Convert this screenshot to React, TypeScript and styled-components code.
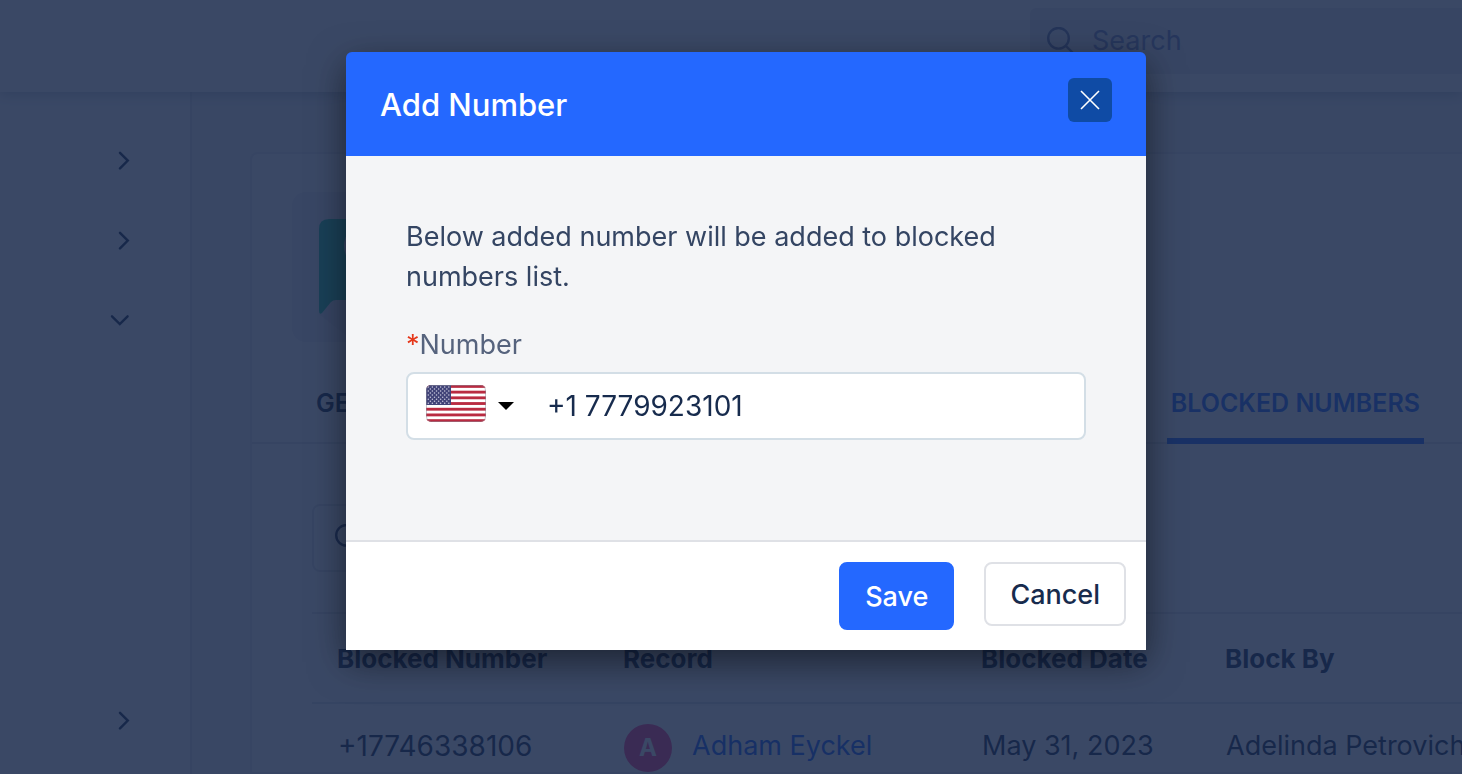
import React from "react";
import styled, { createGlobalStyle } from "styled-components";

const GlobalStyle = createGlobalStyle`
  *, *::before, *::after { box-sizing: border-box; }
  body {
    margin: 0;
    overflow: hidden;
    background: #f4f5f7;
    color: #172b4d;
    font-family: Inter, "Liberation Sans", sans-serif;
    font-size: 27px;
    line-height: 40px;
  }
  button, input { font: inherit; color: inherit; }
  button { padding: 0; border: 0; background: none; cursor: pointer; }
  svg { display: block; flex: none; }
`;

/* ---------- page ---------- */

const Page = styled.div`
  display: flex;
  flex-direction: column;
  height: 100vh;
  overflow: hidden;
`;

const TopBar = styled.header`
  display: flex;
  justify-content: flex-end;
  flex: none;
  padding: 8px 0 18px;
  background: #fff;
  box-shadow: 0 2px 12px rgba(9, 30, 66, 0.25);
  z-index: 1;
`;

const GlobalSearch = styled.label`
  display: flex;
  align-items: center;
  gap: 16px;
  width: 432px;
  height: 66px;
  padding-left: 16px;
  border-radius: 6px 0 0 6px;
  background: #e6eaef;
  color: #6a78a8;
`;

const SearchInput = styled.input`
  flex: 1;
  min-width: 0;
  border: 0;
  outline: 0;
  background: none;
  &::placeholder { color: #7a87c0; opacity: 1; }
`;

const Columns = styled.div`
  display: flex;
  flex: 1;
  min-height: 0;
`;

const Sidebar = styled.nav`
  flex: none;
  width: 192px;
  padding-top: 28px;
  border-right: 2px solid #e3e5ea;
  background: #fbfcfd;
`;

const NavRow = styled.button<{ $open?: boolean }>`
  display: flex;
  align-items: center;
  justify-content: flex-end;
  width: 100%;
  height: 80px;
  padding-right: 60px;
  margin-bottom: ${(p) => (p.$open ? "320px" : "0")};
`;

const Main = styled.main`
  flex: 1;
  min-width: 0;
  padding: 60px 0 0 58px;
`;

const Card = styled.section`
  height: 100%;
  border: 2px solid #e6e8ed;
  border-right: 0;
  border-radius: 8px 0 0 0;
  background: #fff;
  overflow: hidden;
`;

const AppTile = styled.div`
  width: 150px;
  height: 150px;
  margin: 38px 0 0 40px;
  border-radius: 14px;
  background: #eeedf4;
`;

const Tabs = styled.div`
  display: flex;
  justify-content: space-between;
  height: 102px;
  padding: 18px 38px 0 60px;
  border-bottom: 2px solid #e0e3e8;
`;

const Tab = styled.button<{ $active?: boolean }>`
  height: 84px;
  padding: 8px 4px 0;
  border-bottom: 6px solid ${(p) => (p.$active ? "#2468ff" : "transparent")};
  color: ${(p) => (p.$active ? "#2468ff" : "#172b4d")};
  font-size: 25px;
  font-weight: 600;
`;

const Panel = styled.div`
  padding: 60px 0 0 60px;
`;

const TableSearch = styled.label`
  display: flex;
  align-items: center;
  width: 500px;
  height: 68px;
  padding-left: 20px;
  margin-bottom: 40px;
  border: 2px solid #e0e3e8;
  border-radius: 8px;
  color: #2c3d66;
`;

const Table = styled.table`
  width: 100%;
  table-layout: fixed;
  border-collapse: separate;
  border-spacing: 0;
  border-top: 2px solid #e0e3e8;
`;

const HeadCell = styled.th<{ $width?: number }>`
  width: ${(p) => (p.$width ? `${p.$width}px` : "auto")};
  height: 90px;
  padding: 2px 0 0 25px;
  border-bottom: 2px solid #dfe2e8;
  font-size: 26px;
  font-weight: 700;
  text-align: left;
  white-space: nowrap;
`;

const Cell = styled.td<{ $numeric?: boolean }>`
  height: 84px;
  padding: 20px 0 0 26px;
  font-size: ${(p) => (p.$numeric ? 28 : 27)}px;
  line-height: 44px;
  vertical-align: top;
  white-space: nowrap;
`;

const Person = styled.div`
  display: flex;
  align-items: flex-start;
  gap: 20px;
`;

const Avatar = styled.span`
  width: 48px;
  height: 48px;
  border-radius: 50%;
  background: #ff3c8c;
  color: #fff;
  font-size: 24px;
  font-weight: 700;
  line-height: 48px;
  text-align: center;
`;

const PersonLink = styled.a`
  color: #1460ff;
  text-decoration: none;
`;

/* ---------- dialog ---------- */

const Backdrop = styled.div`
  position: fixed;
  inset: 0;
  z-index: 10;
  display: flex;
  align-items: flex-start;
  justify-content: center;
  padding: 52px 0 0 30px;
  background: rgba(23, 40, 74, 0.85);
`;

const Dialog = styled.form`
  width: 800px;
  border-radius: 6px 6px 0 0;
  box-shadow: 0 12px 36px rgba(0, 0, 0, 0.5);
  overflow: hidden;
`;

const DialogHeader = styled.header`
  display: flex;
  align-items: flex-start;
  justify-content: space-between;
  height: 104px;
  padding: 26px 34px;
  background: #2468ff;
  color: #fff;
`;

const DialogTitle = styled.h2`
  margin: 0;
  font-size: 31px;
  font-weight: 500;
  line-height: 54px;
`;

const CloseButton = styled.button`
  display: grid;
  place-items: center;
  width: 44px;
  height: 44px;
  border-radius: 6px;
  background: #0f4ba5;
`;

const DialogBody = styled.div`
  padding: 61px 60px 100px;
  border-bottom: 2px solid #dfe1e6;
  background: #f4f5f7;
`;

const Message = styled.p`
  margin: 0 0 28px;
  color: #344563;
`;

const FieldLabel = styled.label`
  display: block;
  margin-bottom: 7px;
  color: #56637d;
`;

const Required = styled.span`
  color: #e5371a;
`;

const PhoneField = styled.div`
  display: flex;
  align-items: center;
  height: 68px;
  padding: 0 18px;
  border: 2px solid #d3dee6;
  border-radius: 8px;
  background: #fff;
`;

const CountryButton = styled.button`
  display: flex;
  align-items: center;
  gap: 12px;
  margin-right: 33px;
`;

const PhoneInput = styled.input`
  flex: 1;
  min-width: 0;
  padding: 0;
  border: 0;
  outline: 0;
  background: none;
  font-size: 28px;
`;

const DialogFooter = styled.footer`
  display: flex;
  align-items: flex-start;
  justify-content: flex-end;
  gap: 30px;
  padding: 20px;
  background: #fff;
`;

const ActionButton = styled.button<{ $primary?: boolean }>`
  height: ${(p) => (p.$primary ? 68 : 64)}px;
  padding: 2px 24px 0;
  border: 2px solid ${(p) => (p.$primary ? "#2468ff" : "#dfe1e6")};
  border-radius: 8px;
  background: ${(p) => (p.$primary ? "#2468ff" : "#fff")};
  color: ${(p) => (p.$primary ? "#fff" : "#172b4d")};
  font-weight: 500;
`;

/* ---------- drawings ---------- */

const Magnifier = () => (
  <svg width="28" height="28" viewBox="0 0 28 28" fill="none" stroke="currentColor" strokeWidth="2.4">
    <circle cx="12.5" cy="11.3" r="10.3" />
    <path d="M19.8 18.8 L27 26" />
  </svg>
);

const Chevron = ({ down }: { down?: boolean }) => (
  <svg width="20" height="20" viewBox="0 0 20 20" fill="none" stroke="#172b4d" strokeWidth="2.4" strokeLinecap="round">
    <path d={down ? "M2 6.3 L9.8 14 L17.6 6.3" : "M10 2.8 L17.8 10.6 L10 18.4"} />
  </svg>
);

const ChatBubble = () => (
  <svg width="150" height="150" viewBox="0 0 150 150">
    <path d="M27 122 L100 180 L150 150 V108 H42 Z" fill="#e4e3ec" />
    <path d="M37 27 H113 Q123 27 123 37 V98 Q123 108 113 108 H44 Q41 108 39 110 L30 121 Q27 123 27 119 V37 Q27 27 37 27 Z" fill="#28c8a0" />
    <circle cx="75" cy="54" r="23" fill="#eeedf4" />
  </svg>
);

const stripes = [0, 2, 4, 6, 8, 10, 12];
const starRows = [0, 1, 2, 3, 4, 5, 6, 7, 8];

const UsFlag = () => (
  <svg width="60" height="42" viewBox="0 0 60 42">
    <defs>
      <clipPath id="flag-shape">
        <rect width="60" height="37" rx="5" />
      </clipPath>
    </defs>
    <g clipPath="url(#flag-shape)">
      <rect width="60" height="37" fill="#fff" />
      {stripes.map((i) => (
        <rect key={i} y={i * 2.85} width="60" height="2.85" fill="#b92b41" />
      ))}
      <rect width="25" height="20" fill="#414378" />
      {starRows.map((row) =>
        (row % 2 ? [0, 1, 2, 3, 4] : [0, 1, 2, 3, 4, 5]).map((col) => (
          <circle key={`${row}-${col}`} cx={(row % 2 ? 4.4 : 2.3) + col * 4.1} cy={1.9 + row * 2.05} r="0.75" fill="#c9c9dc" />
        ))
      )}
    </g>
    <rect x="0.5" y="0.5" width="59" height="36" rx="5" fill="none" stroke="#8c8c99" strokeOpacity="0.5" />
  </svg>
);

const Caret = () => (
  <svg width="16" height="8" viewBox="0 0 16 8">
    <path d="M0 0 H16 L8 8 Z" fill="#000" />
  </svg>
);

const Cross = () => (
  <svg width="20" height="20" viewBox="0 0 20 20" fill="none" stroke="#fff" strokeWidth="1.6">
    <path d="M1 1 L19 19 M19 1 L1 19" />
  </svg>
);

/* ---------- app ---------- */

export default function App() {
  return (
    <>
      <GlobalStyle />
      <Page>
        <TopBar>
          <GlobalSearch>
            <Magnifier />
            <SearchInput type="search" placeholder="Search" />
          </GlobalSearch>
        </TopBar>
        <Columns>
          <Sidebar>
            <NavRow type="button"><Chevron /></NavRow>
            <NavRow type="button"><Chevron /></NavRow>
            <NavRow type="button" $open><Chevron down /></NavRow>
            <NavRow type="button"><Chevron /></NavRow>
          </Sidebar>
          <Main>
            <Card>
              <AppTile><ChatBubble /></AppTile>
              <Tabs>
                <Tab type="button">GENERAL</Tab>
                <Tab type="button" $active>BLOCKED NUMBERS</Tab>
              </Tabs>
              <Panel>
                <TableSearch>
                  <Magnifier />
                  <SearchInput type="search" />
                </TableSearch>
                <Table>
                  <thead>
                    <tr>
                      <HeadCell $width={286}>Blocked Number</HeadCell>
                      <HeadCell $width={358}>Record</HeadCell>
                      <HeadCell $width={244}>Blocked Date</HeadCell>
                      <HeadCell>Block By</HeadCell>
                    </tr>
                  </thead>
                  <tbody>
                    <tr>
                      <Cell $numeric>+17746338106</Cell>
                      <Cell>
                        <Person>
                          <Avatar>A</Avatar>
                          <PersonLink href="#adham-eyckel">Adham Eyckel</PersonLink>
                        </Person>
                      </Cell>
                      <Cell>May 31, 2023</Cell>
                      <Cell>Adelinda Petrovich</Cell>
                    </tr>
                  </tbody>
                </Table>
              </Panel>
            </Card>
          </Main>
        </Columns>
      </Page>
      <Backdrop>
        <Dialog role="dialog" aria-labelledby="dialog-title" onSubmit={(e) => e.preventDefault()}>
          <DialogHeader>
            <DialogTitle id="dialog-title">Add Number</DialogTitle>
            <CloseButton type="button" aria-label="Close"><Cross /></CloseButton>
          </DialogHeader>
          <DialogBody>
            <Message>Below added number will be added to blocked numbers list.</Message>
            <FieldLabel htmlFor="phone"><Required>*</Required>Number</FieldLabel>
            <PhoneField>
              <CountryButton type="button">
                <UsFlag />
                <Caret />
              </CountryButton>
              <PhoneInput id="phone" type="tel" defaultValue="+1 7779923101" />
            </PhoneField>
          </DialogBody>
          <DialogFooter>
            <ActionButton type="submit" $primary>Save</ActionButton>
            <ActionButton type="button">Cancel</ActionButton>
          </DialogFooter>
        </Dialog>
      </Backdrop>
    </>
  );
}
